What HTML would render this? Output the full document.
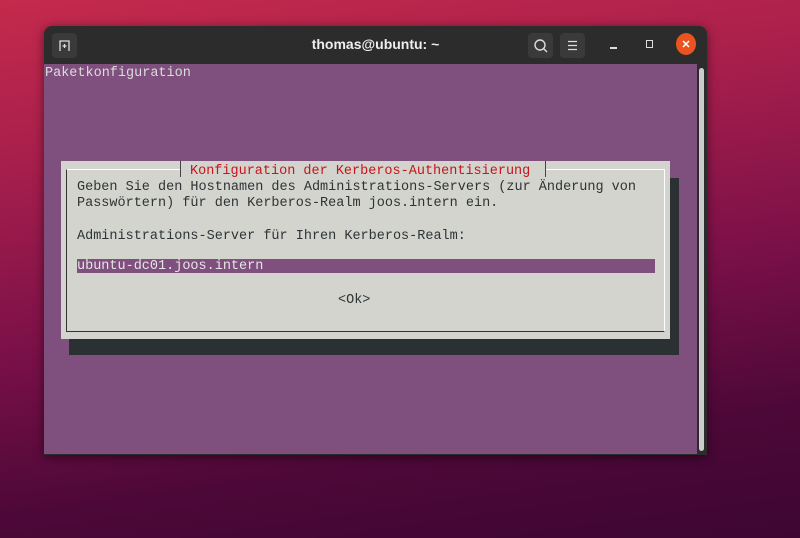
<!DOCTYPE html>
<html><head><meta charset="utf-8"><style>
*{margin:0;padding:0;box-sizing:border-box}
body{width:800px;height:538px;overflow:hidden;position:relative;
background:linear-gradient(172deg,#c42a4c 0%,#a81f4c 25%,#7a1048 55%,#4c0838 80%,#3e0533 100%);
font-family:"Liberation Mono",monospace}
.abs{position:absolute}
.win{left:44px;top:26px;width:663px;height:429px;background:#2c2c2c;border-radius:8px 8px 0 0;box-shadow:0 2px 10px rgba(0,0,0,.5)}
.term{left:44px;top:64px;width:653px;height:390px;background:#7f4f7e}
.sb{left:697px;top:64px;width:10px;height:391px;background:#2c2c2c}
.thumb{left:699px;top:68px;width:5px;height:383px;background:#ccc;border-radius:3px}
.t{font-size:13.5px;line-height:16px;white-space:pre;color:#2e3436}
.btn{background:#3a3a3a;border-radius:4px;width:25px;height:25px}
</style></head><body>
<div class="abs win"></div>
<div class="abs btn" style="left:52px;top:33px"><svg width="25" height="25"><path d="M8 18V8h9v10M10.5 13h4M12.5 11v4" stroke="#ddd" stroke-width="1.3" fill="none"/></svg></div>
<div class="abs" style="left:44px;top:36px;width:663px;text-align:center;font:bold 14px 'Liberation Sans',sans-serif;color:#eee">thomas@ubuntu: ~</div>
<div class="abs btn" style="left:528px;top:33px"><svg width="25" height="25"><circle cx="12" cy="12" r="5" stroke="#ddd" stroke-width="1.4" fill="none"/><path d="M15.5 15.5l3.5 3.5" stroke="#ddd" stroke-width="1.4"/></svg></div>
<div class="abs btn" style="left:560px;top:33px"><svg width="25" height="25"><path d="M8 8.5h9M8 12.5h9M8 16.5h9" stroke="#ddd" stroke-width="1.3"/></svg></div>
<div class="abs" style="left:610px;top:47px;width:7px;height:1.5px;background:#ddd"></div>
<div class="abs" style="left:646px;top:40px;width:7px;height:8px;border:1.5px solid #ddd"></div>
<div class="abs" style="left:676px;top:33px;width:20px;height:22px;border-radius:50%;background:#e95420"><svg width="20" height="22"><path d="M7 8l6 6M13 8l-6 6" stroke="#fff" stroke-width="1.5"/></svg></div>
<div class="abs term"></div>
<div class="abs sb"></div><div class="abs thumb"></div>
<div class="abs t" style="left:45px;top:66px;color:#dcdcdc">Paketkonfiguration</div>
<div class="abs" style="left:69px;top:178px;width:610px;height:177px;background:#2b3033"></div>
<div class="abs" style="left:61px;top:161px;width:609px;height:178px;background:#d3d4ce"></div>
<div class="abs" style="left:66px;top:169px;width:599px;height:163px;border:1px solid #333;border-top-color:#fff;border-right-color:#fff"></div>
<div class="abs" style="left:180px;top:161px;width:366px;height:16px;background:#d3d4ce;border-left:1px solid #444;border-right:1px solid #444"></div>
<div class="abs t" style="left:190px;top:164px;color:#c8141c">Konfiguration der Kerberos-Authentisierung</div>
<div class="abs t" style="left:77px;top:180px">Geben Sie den Hostnamen des Administrations-Servers (zur Änderung von
Passwörtern) für den Kerberos-Realm joos.intern ein.</div>
<div class="abs t" style="left:77px;top:229px">Administrations-Server für Ihren Kerberos-Realm:</div>
<div class="abs" style="left:77px;top:259px;width:578px;height:14px;background:#7f4f7e"></div>
<div class="abs t" style="left:77px;top:259px;color:#e6e6e6">ubuntu-dc01.joos.intern</div>
<div class="abs t" style="left:338px;top:293px">&lt;Ok&gt;</div>
</body></html>
